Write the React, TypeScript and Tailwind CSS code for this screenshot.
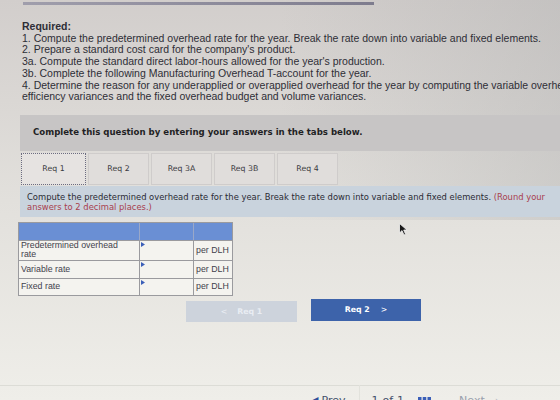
import React from "react";

const tabs = ["Req 1", "Req 2", "Req 3A", "Req 3B", "Req 4"];

const rows = [
  { label: ["Predetermined overhead", "rate"], unit: "per DLH", h: "h-[20px]" },
  { label: ["Variable rate"], unit: "per DLH", h: "h-[18px]" },
  { label: ["Fixed rate"], unit: "per DLH", h: "h-[17px]" },
];

const verdana = { fontFamily: "'DejaVu Sans', Verdana, sans-serif" };

function Marker() {
  return (
    <svg width="4" height="5" viewBox="0 0 4 5" className="absolute left-[1px] top-[1px]">
      <path d="M0 0 L4 2.5 L0 5 Z" fill="#3b5fb8" />
    </svg>
  );
}

export default function App() {
  return (
    <div
      className="relative w-[560px] h-[400px] overflow-hidden bg-gradient-to-b from-[#d2cecc] via-[#e2e0dc] to-[#efeee9] text-[#2b2b2e]"
      style={{ fontFamily: "'Liberation Sans', Arial, sans-serif" }}
    >
      {/* darker upper-right corner of the screen */}
      <div className="pointer-events-none absolute inset-x-0 top-0 h-[220px] bg-gradient-to-r from-transparent via-transparent to-[#b0b0b0]/40" />

      <div className="relative">
        {/* top rule */}
        <div className="ml-[23px] mt-[2px] h-[3px] w-[351px] bg-gradient-to-r from-[#a09eac] to-[#7e7c8e]" />

        <div className="pl-[20px]">
          {/* requirements */}
          <div className="mt-[16px] pl-[2px] text-[10.5px] leading-[11.7px] text-[#2e2e36] whitespace-nowrap">
            <div className="font-bold">Required:</div>
            <div>1. Compute the predetermined overhead rate for the year. Break the rate down into variable and fixed elements.</div>
            <div>2. Prepare a standard cost card for the company's product.</div>
            <div>3a. Compute the standard direct labor-hours allowed for the year's production.</div>
            <div>3b. Complete the following Manufacturing Overhead T-account for the year.</div>
            <div>4. Determine the reason for any underapplied or overapplied overhead for the year by computing the variable overhead rate and</div>
            <div>efficiency variances and the fixed overhead budget and volume variances.</div>
          </div>

          {/* instruction band */}
          <div
            className="mt-[12px] h-[36px] bg-[#c7c5c5] pl-[13px] flex items-center text-[8.6px] font-bold text-[#1f1f24]"
            style={verdana}
          >
            Complete this question by entering your answers in the tabs below.
          </div>

          {/* tabs */}
          <div className="mt-[2px] ml-[1px] flex gap-[2px] text-[7.8px] text-[#3a3a40]" style={verdana}>
            {tabs.map((t, i) => (
              <div
                key={t}
                className={
                  i === 0
                    ? "w-[65px] h-[32px] flex items-center justify-center bg-[#e6e3e1] border border-dotted border-[#6c6c80]"
                    : "w-[61px] h-[32px] flex items-center justify-center bg-[#e0dddb] border border-[#cfcccb]"
                }
              >
                {t}
              </div>
            ))}
          </div>

          {/* question prompt */}
          <div
            className="mt-[1px] h-[31px] bg-[#c9d3dd] pl-[7px] pt-[6px] text-[8.4px] leading-[10px] text-[#2a2a33] whitespace-nowrap"
            style={verdana}
          >
            <div>
              Compute the predetermined overhead rate for the year. Break the rate down into variable and fixed elements.{" "}
              <span className="text-[#a8404d]">(Round your</span>
            </div>
            <div className="text-[#a8404d]">answers to 2 decimal places.)</div>
          </div>

          {/* answer table */}
          <div className="mt-[5px] ml-[-2px] w-[215px] border border-[#9a9a9e] text-[8.8px] leading-[9.6px] text-[#42424c]">
            <div className="flex h-[17px] bg-[#6a8fd4]">
              <div className="w-[121px] border-r border-[#9aa8c8]" />
              <div className="w-[54px] border-r border-[#9aa8c8]" />
              <div className="flex-1" />
            </div>
            {rows.map((r, i) => (
              <div key={i} className={"flex border-t border-[#9a9a9e] bg-[#f4f3ef] " + r.h}>
                <div className="w-[121px] border-r border-[#9a9a9e] pl-[2px] flex flex-col justify-center">
                  {r.label.map((l) => (
                    <div key={l}>{l}</div>
                  ))}
                </div>
                <div className="relative w-[54px] border-r border-[#9a9a9e]">
                  <Marker />
                </div>
                <div className="flex-1 flex items-center pl-[2px]">{r.unit}</div>
              </div>
            ))}
          </div>

          {/* navigation buttons */}
          <div className="mt-[3px] ml-[166px] flex items-start gap-[14px] text-[7.8px] font-bold" style={verdana}>
            <div className="mt-[2px] w-[111px] h-[21px] bg-[#cdd3dc] text-[#e9edf3] flex items-center justify-center gap-[10px]">
              <span className="font-normal">&lt;</span>
              <span>Req 1</span>
            </div>
            <div className="w-[110px] h-[22px] bg-[#3d63aa] text-white flex items-center justify-center gap-[11px]">
              <span>Req 2</span>
              <span className="font-normal">&gt;</span>
            </div>
          </div>
        </div>
      </div>

      {/* lower footer rule and pager */}
      <div className="absolute left-0 right-0 top-[385px] h-px bg-[#dcdcd6]" />
      <div className="absolute left-[359px] top-[385px] w-px h-[15px] bg-[#e2e2dc]" />
      <div className="absolute top-[393px] left-[310px] flex items-center text-[11px] text-[#44506a]" style={verdana}>
        <span className="mr-[3px] text-[#2f4f9a]">◀</span>
        <span className="mr-[26px]">Prev</span>
        <span>1</span>
        <span className="ml-[4px] mr-[4px]">of</span>
        <span className="mr-[14px]">1</span>
        <svg width="13" height="8" viewBox="0 0 13 8" className="mr-[28px]">
          <rect x="0" y="0" width="3.5" height="3.5" fill="#3b5fb8" />
          <rect x="4.75" y="0" width="3.5" height="3.5" fill="#3b5fb8" />
          <rect x="9.5" y="0" width="3.5" height="3.5" fill="#3b5fb8" />
          <rect x="0" y="4.5" width="3.5" height="3.5" fill="#3b5fb8" />
          <rect x="4.75" y="4.5" width="3.5" height="3.5" fill="#3b5fb8" />
          <rect x="9.5" y="4.5" width="3.5" height="3.5" fill="#3b5fb8" />
        </svg>
        <span className="text-[#9aa0ac]">Next</span>
        <span className="ml-[10px] text-[#b5b9c0]">›</span>
      </div>

      {/* mouse pointer */}
      <svg width="9" height="13" viewBox="0 0 9 13" className="absolute left-[399px] top-[223px]">
        <path d="M0.5 0.5 L0.5 10 L3 7.6 L5 12 L6.6 11.3 L4.7 7 L8 7 Z" fill="#1a1a1a" stroke="#f4f4f4" strokeWidth="0.8" />
      </svg>
    </div>
  );
}
